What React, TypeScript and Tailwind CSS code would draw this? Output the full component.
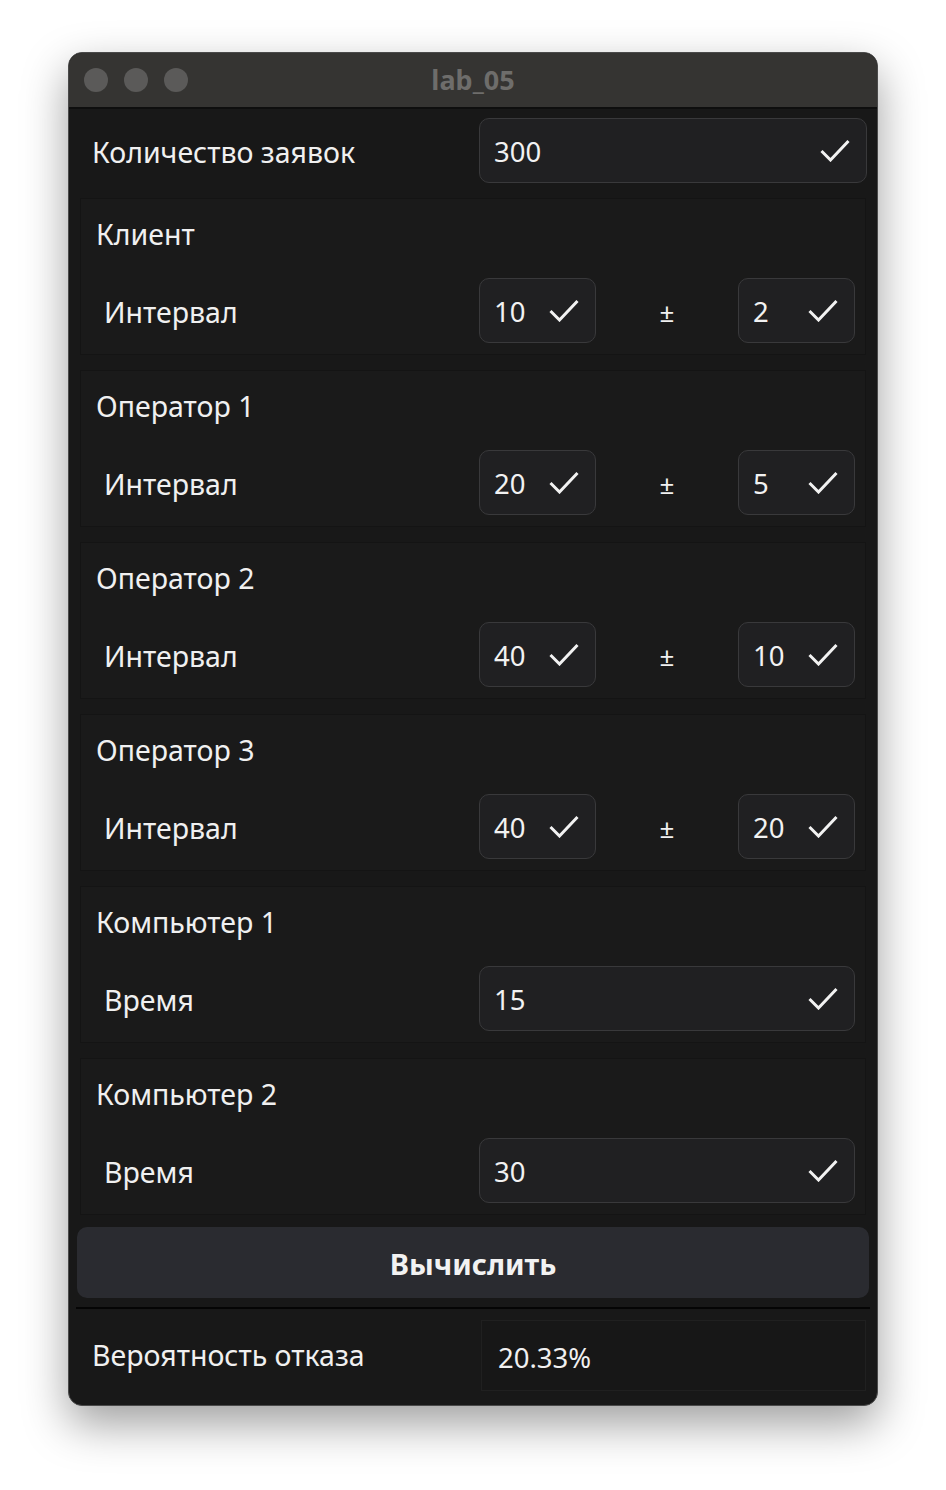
import React from "react"

const font = { fontFamily: '"Noto Sans", "Open Sans", sans-serif' }

function Check() {
  return (
    <svg width="30" height="23" viewBox="0 0 30 23" fill="none" className="shrink-0">
      <polyline points="1.5,12 10.5,21 28.5,2" stroke="#f2f2f2" strokeWidth="3" />
    </svg>
  )
}

function Field({ value, className = "" }: { value: string; className?: string }) {
  return (
    <div
      className={
        "h-[65px] flex items-center justify-between pl-[14px] pr-[16px] rounded-[10px] border-[1.5px] border-[#39393b] bg-[#202022] " +
        className
      }
    >
      <span className="pt-[2px] text-[27.5px] text-[#f2f2f2] leading-none">{value}</span>
      <Check />
    </div>
  )
}

type Group = { title: string; label: string; values: string[] }

const groups: Group[] = [
  { title: "Клиент", label: "Интервал", values: ["10", "2"] },
  { title: "Оператор 1", label: "Интервал", values: ["20", "5"] },
  { title: "Оператор 2", label: "Интервал", values: ["40", "10"] },
  { title: "Оператор 3", label: "Интервал", values: ["40", "20"] },
  { title: "Компьютер 1", label: "Время", values: ["15"] },
  { title: "Компьютер 2", label: "Время", values: ["30"] },
]

function GroupBox({ g }: { g: Group }) {
  return (
    <div className="h-[157px] border border-[#141414] bg-[#1a1a1a] flex flex-col">
      <div className="h-[36px] mt-[17px] pl-[15px] flex items-center text-[28.5px] text-[#f0f0f0]">{g.title}</div>
      <div className="mt-[26px] flex items-center pr-[10px]">
        <div className="w-[398px] pl-[23px] pt-[3px] text-[28.5px] text-[#f0f0f0]">{g.label}</div>
        {g.values.length === 2 ? (
          <>
            <Field value={g.values[0]} className="w-[117px]" />
            <div className="w-[142px] text-center text-[26px] text-[#f0f0f0] pt-[4px]">±</div>
            <Field value={g.values[1]} className="w-[117px]" />
          </>
        ) : (
          <Field value={g.values[0]} className="flex-1" />
        )}
      </div>
    </div>
  )
}

export default function App() {
  return (
    <div className="min-h-screen bg-white pt-[52px] pl-[68px]" style={font}>
      <div className="w-[810px] rounded-[14px] overflow-hidden border border-[#4a4a4a] bg-[#181818] shadow-[0_18px_45px_rgba(0,0,0,0.38)]">
        {/* title bar */}
        <div className="h-[56px] bg-[#353432] border-b-2 border-[#0e0e0e] relative flex items-center">
          <div className="flex gap-[16px] pl-[15px]">
            <div className="w-[24px] h-[24px] rounded-full bg-[#5b5a59]" />
            <div className="w-[24px] h-[24px] rounded-full bg-[#5b5a59]" />
            <div className="w-[24px] h-[24px] rounded-full bg-[#5b5a59]" />
          </div>
          <div className="absolute inset-0 flex items-center justify-center text-[27px] font-bold text-[#6e6d6b]">
            lab_05
          </div>
        </div>

        {/* count */}
        <div className="mt-[9px] flex items-center pl-[23px] pr-[10px]">
          <div className="w-[387px] pt-[3px] text-[28.5px] text-[#f0f0f0]">Количество заявок</div>
          <Field value="300" className="flex-1" />
        </div>

        {/* groups */}
        <div className="mt-[15px] mx-[11px] flex flex-col gap-[15px]">
          {groups.map((g) => (
            <GroupBox key={g.title} g={g} />
          ))}
        </div>

        <div className="mt-[12px] mx-[8px] h-[71px] rounded-[10px] bg-[#2a2b30] flex items-center justify-center pt-[3px] text-[29px] font-bold text-[#f2f2f2]">
          Вычислить
        </div>

        <div className="mt-[9px] mx-[7px] h-[2px] bg-[#050505]" />

        <div className="mt-[11px] mb-[14px] flex items-center pl-[23px] pr-[11px]">
          <div className="w-[389px] text-[28.5px] text-[#f0f0f0]">Вероятность отказа</div>
          <div className="flex-1 h-[71px] border border-[#202020] bg-[#171717] flex items-center pl-[16px] pt-[5px] text-[27.5px] text-[#f0f0f0]">
            20.33%
          </div>
        </div>
      </div>
    </div>
  )
}
